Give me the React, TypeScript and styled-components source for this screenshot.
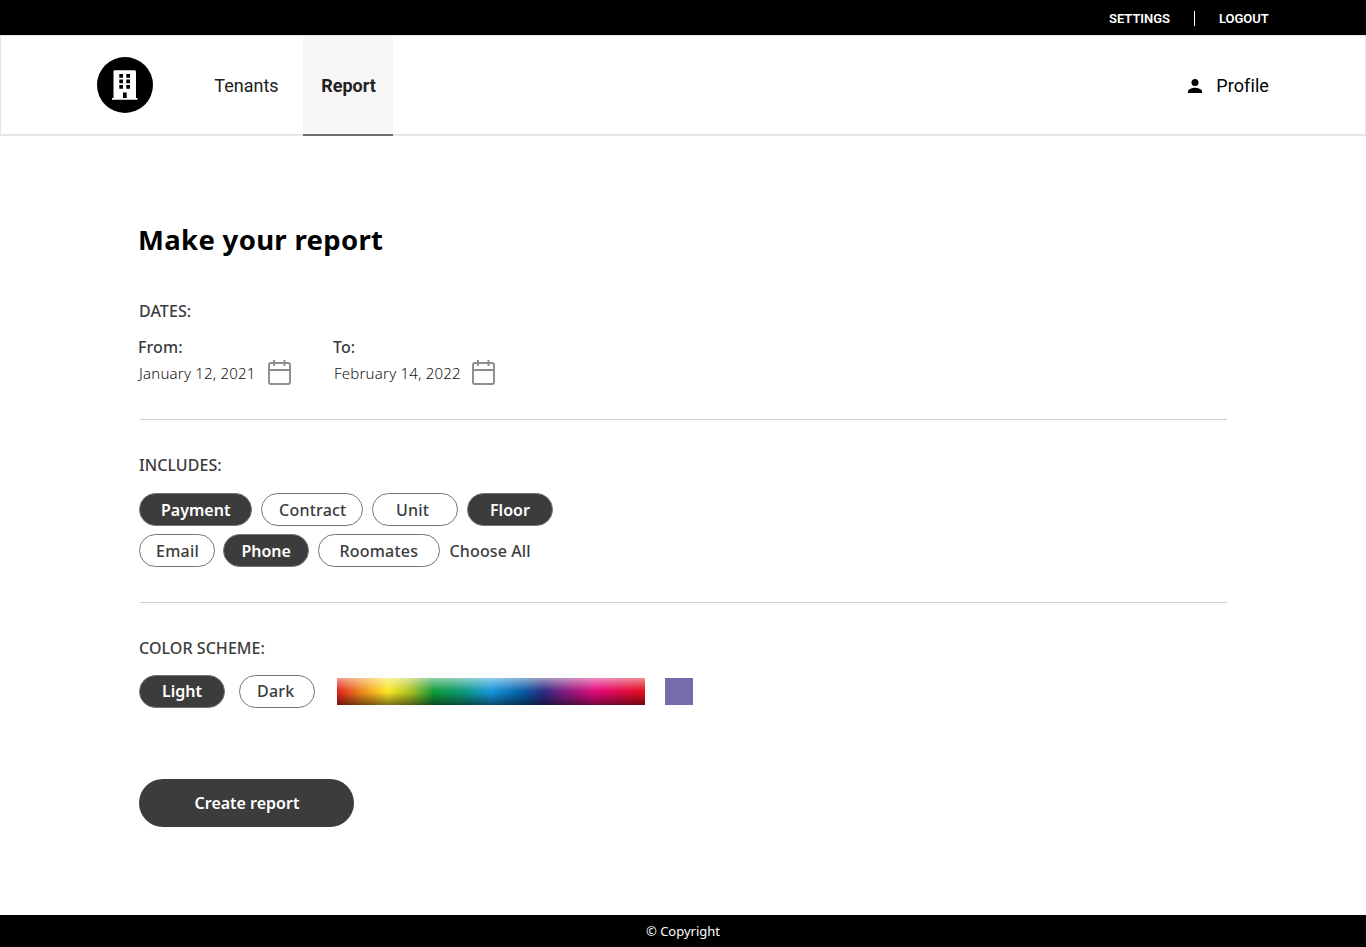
import React from "react";
import styled, { createGlobalStyle } from "styled-components";

const GlobalStyle = createGlobalStyle`
  *, *::before, *::after { box-sizing: border-box; }
  body { margin: 0; background: #fff; color: #3c3c3c; font-family: "Noto Sans", sans-serif; font-size: 16px; }
  h1, h2, p { margin: 0; font-weight: inherit; }
  button { font: inherit; color: inherit; background: none; border: 0; padding: 0; cursor: pointer; }
`;

const Page = styled.div`
  display: flex;
  flex-direction: column;
  min-height: 947px;
`;

const TopBar = styled.div`
  display: flex;
  justify-content: flex-end;
  align-items: center;
  height: 35px;
  padding: 2px 97px 0 0;
  background: #000;
  color: #fff;
  font: 600 13px/20px Roboto, sans-serif;
`;

const TopLink = styled.span<{ $width: number }>`
  width: ${(p) => p.$width}px;
  letter-spacing: -0.03px;
  white-space: nowrap;
`;

const TopDivider = styled.span`
  width: 1px;
  height: 15px;
  margin: 0 24px;
  background: #fff;
`;

const Header = styled.header`
  display: flex;
  height: 101px;
  padding: 0 96px;
  border: 1px solid #e6e6e6;
  border-bottom-width: 2px;
  font: 400 18px/24px Roboto, sans-serif;
  color: #212121;
`;

const Logo = styled.div`
  display: flex;
  width: 56px;
  height: 56px;
  margin-top: 21px;
  border-radius: 50%;
  background: #000;
`;

const Tab = styled.a<{ $active?: boolean }>`
  height: 100px;
  padding-top: 38px;
  margin-left: ${(p) => (p.$active ? 24 : 61)}px;
  width: ${(p) => (p.$active ? 90 : 65)}px;
  text-align: center;
  white-space: nowrap;
  ${(p) => p.$active && "padding-left: 1px; font-weight: 700; background: #f7f7f7; border-bottom: 2px solid #6f6f6f;"}
`;

const Profile = styled.div`
  display: flex;
  align-items: center;
  gap: 14px;
  height: 24px;
  margin: 38px 0 0 auto;
  letter-spacing: 0.08px;
  color: #000;
`;

const Main = styled.main`
  flex: 1;
  padding: 81px 139px 0;
`;

const Title = styled.h1`
  margin-left: -1px;
  font-size: 27.5px;
  font-weight: 700;
  letter-spacing: 0.32px;
  line-height: 46px;
  color: #000;
  white-space: nowrap;
`;

const Section = styled.section<{ $height: number; $top: number; $ruled?: boolean }>`
  height: ${(p) => p.$height}px;
  padding-top: ${(p) => p.$top}px;
  margin-left: 1px;
  width: 1087px;
  border-bottom: ${(p) => (p.$ruled ? "1px solid #cdcdcd" : "0")};
`;

const SectionTitle = styled.h2`
  margin-left: -1px;
  font-size: 16px;
  font-weight: 500;
  letter-spacing: 0.06px;
  line-height: 24px;
`;

const Dates = styled.div`
  display: flex;
  margin: 12px 0 0 -2px;
`;

const DateField = styled.div<{ $width: number }>`
  width: ${(p) => p.$width}px;
`;

const DateLabel = styled.p`
  font-size: 16px;
  font-weight: 500;
  letter-spacing: 0.1px;
  line-height: 24px;
`;

const DateValue = styled.div<{ $text: number }>`
  display: flex;
  height: 28px;
  padding-left: 1px;
  font-size: 15px;
  font-weight: 300;
  letter-spacing: 0.21px;
  line-height: 28px;
  color: #141414;
  span { width: ${(p) => p.$text}px; white-space: nowrap; }
`;

const ChipRow = styled.div<{ $top: number; $gap?: number }>`
  display: flex;
  gap: ${(p) => p.$gap ?? 9}px;
  margin: ${(p) => p.$top}px 0 0 -1px;
`;

const Chip = styled.button<{ $width: number; $inset: number; $on?: boolean; $drop?: number }>`
  width: ${(p) => p.$width}px;
  height: 33px;
  padding: ${(p) => p.$drop ?? 1}px 0 0 ${(p) => p.$inset}px;
  border: 1px solid #757575;
  border-radius: 17px;
  text-align: left;
  white-space: nowrap;
  line-height: ${(p) => 31 - (p.$drop ?? 1)}px;
  font-size: 16px;
  font-weight: ${(p) => (p.$on ? 600 : 500)};
  letter-spacing: ${(p) => (p.$on ? 0 : 0.22)}px;
  color: ${(p) => (p.$on ? "#fff" : "#3c3c3c")};
  background: ${(p) => (p.$on ? "#3c3c3c" : "#fff")};
`;

const ChooseAll = styled.button`
  margin-left: 1px;
  height: 33px;
  padding-top: 2px;
  line-height: 31px;
  font-weight: 500;
  letter-spacing: 0.12px;
  white-space: nowrap;
`;

const Spectrum = styled.div`
  width: 308px;
  height: 27px;
  margin: 3px 0 0 8px;
  background:
    linear-gradient(to bottom, rgba(255,255,255,.52) 0%, rgba(255,255,255,0) 48%, rgba(0,0,0,0) 52%, rgba(0,0,0,.5) 100%),
    linear-gradient(to right, #e2231c 0%, #f08a1e 8%, #fde725 16.5%, #a9c227 24%, #109b3a 31.5%, #0d9a74 40%, #1698dd 50%, #0860a8 60%, #2e2a82 67%, #8c1d80 75%, #e40a7c 84%, #e20a4c 92%, #e20f18 100%);
`;

const Swatch = styled.div`
  width: 28px;
  height: 27px;
  margin: 3px 0 0 6px;
  background: #756cae;
`;

const CreateButton = styled.button`
  display: block;
  width: 215px;
  height: 48px;
  padding-left: 1px;
  border-radius: 24px;
  background: #3c3c3c;
  color: #fff;
  font-weight: 600;
  line-height: 48px;
`;

const Footer = styled.footer`
  height: 32px;
  background: #000;
  color: #fff;
  text-align: center;
  font-size: 13px;
  line-height: 32px;
`;

const CalendarIcon = () => (
  <svg width="25" height="28" viewBox="0 0 25 28" fill="none" stroke="#8c8c8c" strokeWidth="1.900">
    <rect x="2" y="4" width="21" height="21" rx="2" />
    <path d="M2 11H23M7 1V7M17.500 1V7" />
  </svg>
);

const BuildingIcon = () => (
  <svg width="56" height="56" viewBox="0 0 56 56">
    <path fill="#fff" d="M17.500 13.200h20q1.500 0 1.500 1.500V41h1.500v1.800H15V41h1.500V14.200q0-1 1-1z" />
    <path fill="#000" d="M22.300 17h3.700v3.800h-3.700zM29.300 17h3.700v3.800h-3.700zM22.300 22.600h3.700v3.700h-3.700zM29.300 22.600h3.700v3.700h-3.700zM22.300 28h3.700v3.800h-3.700zM29.300 28h3.700v3.800h-3.700zM26 35.500h3.700v5.500h-3.700z" />
  </svg>
);

const PersonIcon = () => (
  <svg width="14" height="14" viewBox="0 0 14 14" fill="#000">
    <circle cx="7" cy="3.500" r="3.500" />
    <path d="M0 14v-1.800C0 9.900 4.600 8.700 7 8.700s7 1.200 7 3.500V14z" />
  </svg>
);

export default function App() {
  return (
    <Page>
      <GlobalStyle />
      <TopBar>
        <TopLink $width={61}>SETTINGS</TopLink>
        <TopDivider />
        <TopLink $width={50}>LOGOUT</TopLink>
      </TopBar>
      <Header>
        <Logo><BuildingIcon /></Logo>
        <Tab>Tenants</Tab>
        <Tab $active>Report</Tab>
        <Profile><PersonIcon />Profile</Profile>
      </Header>
      <Main>
        <Title>Make your report</Title>
        <Section $height={157} $top={36} $ruled>
          <SectionTitle>DATES:</SectionTitle>
          <Dates>
            <DateField $width={195}>
              <DateLabel>From:</DateLabel>
              <DateValue $text={128}><span>January 12, 2021</span><CalendarIcon /></DateValue>
            </DateField>
            <DateField $width={170}>
              <DateLabel>To:</DateLabel>
              <DateValue $text={137}><span>February 14, 2022</span><CalendarIcon /></DateValue>
            </DateField>
          </Dates>
        </Section>
        <Section $height={183} $top={33} $ruled>
          <SectionTitle>INCLUDES:</SectionTitle>
          <ChipRow $top={16}>
            <Chip $width={113} $inset={21} $on>Payment</Chip>
            <Chip $width={102} $inset={17}>Contract</Chip>
            <Chip $width={86} $inset={23}>Unit</Chip>
            <Chip $width={86} $inset={22} $on>Floor</Chip>
          </ChipRow>
          <ChipRow $top={8} $gap={8.4}>
            <Chip $width={76} $inset={16}>Email</Chip>
            <Chip $width={86} $inset={17} $on>Phone</Chip>
            <Chip $width={122.4} $inset={20.6}>Roomates</Chip>
            <ChooseAll>Choose All</ChooseAll>
          </ChipRow>
        </Section>
        <Section $height={176} $top={33}>
          <SectionTitle>COLOR SCHEME:</SectionTitle>
          <ChipRow $top={15} $gap={14}>
            <Chip $width={86} $inset={22} $drop={0} $on>Light</Chip>
            <Chip $width={76} $inset={17} $drop={0}>Dark</Chip>
            <Spectrum />
            <Swatch />
          </ChipRow>
        </Section>
        <CreateButton>Create report</CreateButton>
      </Main>
      <Footer>© Copyright</Footer>
    </Page>
  );
}
